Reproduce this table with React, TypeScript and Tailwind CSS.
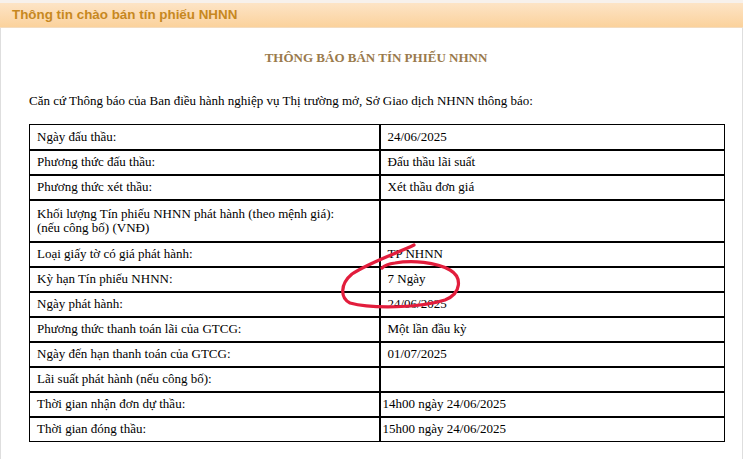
import React from 'react';

const rows: { label: string[]; value: string; tight?: boolean; tall?: boolean }[] = [
  { label: ['Ngày đấu thầu:'], value: '24/06/2025' },
  { label: ['Phương thức đấu thầu:'], value: 'Đấu thầu lãi suất' },
  { label: ['Phương thức xét thầu:'], value: 'Xét thầu đơn giá' },
  {
    label: ['Khối lượng Tín phiếu NHNN phát hành (theo mệnh giá):', '(nếu công bố) (VNĐ)'],
    value: '',
    tall: true
  },
  { label: ['Loại giấy tờ có giá phát hành:'], value: 'TP NHNN' },
  { label: ['Kỳ hạn Tín phiếu NHNN:'], value: '7 Ngày' },
  { label: ['Ngày phát hành:'], value: '24/06/2025' },
  { label: ['Phương thức thanh toán lãi của GTCG:'], value: 'Một lần đầu kỳ' },
  { label: ['Ngày đến hạn thanh toán của GTCG:'], value: '01/07/2025' },
  { label: ['Lãi suất phát hành (nếu công bố):'], value: '' },
  { label: ['Thời gian nhận đơn dự thầu:'], value: '14h00 ngày 24/06/2025', tight: true },
  { label: ['Thời gian đóng thầu:'], value: '15h00 ngày 24/06/2025', tight: true }
];

export default function App() {
  return (
    <div className="relative w-[747px] h-[459px] overflow-hidden bg-white">
      <div className="h-[3px] w-[743px] bg-[#f7f1ec]" />
      <div className="flex items-center h-[25px] w-[743px] px-[12px] bg-gradient-to-b from-[#fde4c6] to-[#fbd29c] border-b border-[#f3dcc0]">
        <span className="font-['Liberation_Sans',Arial,sans-serif] font-bold text-[13.4px] text-[#c7881f]">
          Thông tin chào bán tín phiếu NHNN
        </span>
      </div>
      <div className="w-[743px] h-[431px] border-x border-[#dedede] font-['Liberation_Serif','Times_New_Roman',serif] text-[13px] text-black">
        <h1 className="pt-[22px] pl-[9px] text-center font-bold text-[13px] leading-[16px] text-[#9a7a4c]">
          THÔNG BÁO BÁN TÍN PHIẾU NHNN
        </h1>
        <p className="mt-[27px] pl-[28px] leading-[16px]">
          Căn cứ Thông báo của Ban điều hành nghiệp vụ Thị trường mở, Sở Giao dịch NHNN thông báo:
        </p>
        <table className="mt-[15px] ml-[28px] w-[696px] border-collapse border border-black">
          <tbody>
            {rows.map((row, i) => (
              <tr
                key={i}
                className={`${row.tall ? 'h-[42px]' : 'h-[25px]'} ${i > 0 ? 'border-t-2 border-black' : ''}`}>
                <td className="w-[350px] border-r-2 border-black pl-[7px] align-middle leading-[14px]">
                  {row.label.map((l, j) => (
                    <div key={j}>{l}</div>
                  ))}
                </td>
                <td className={`${row.tight ? 'pl-[2px]' : 'pl-[7px]'} align-middle leading-[14px]`}>
                  {row.value}
                </td>
              </tr>
            ))}
          </tbody>
        </table>
      </div>
      {/* hand-drawn red circle around the term */}
      <svg className="absolute left-0 top-0 pointer-events-none" width="747" height="459">
        <path
          d="M414 245 C400 252 370 262 352 274 C340 284 340 298 350 303 C372 309 420 308 445 300 C462 293 462 277 450 270 C436 262 412 260 395 263 C388 264 384 266 382 268"
          fill="none"
          stroke="#e21d3c"
          strokeWidth="3.2"
          strokeLinecap="round"
          strokeLinejoin="round"
        />
      </svg>
    </div>
  );
}
